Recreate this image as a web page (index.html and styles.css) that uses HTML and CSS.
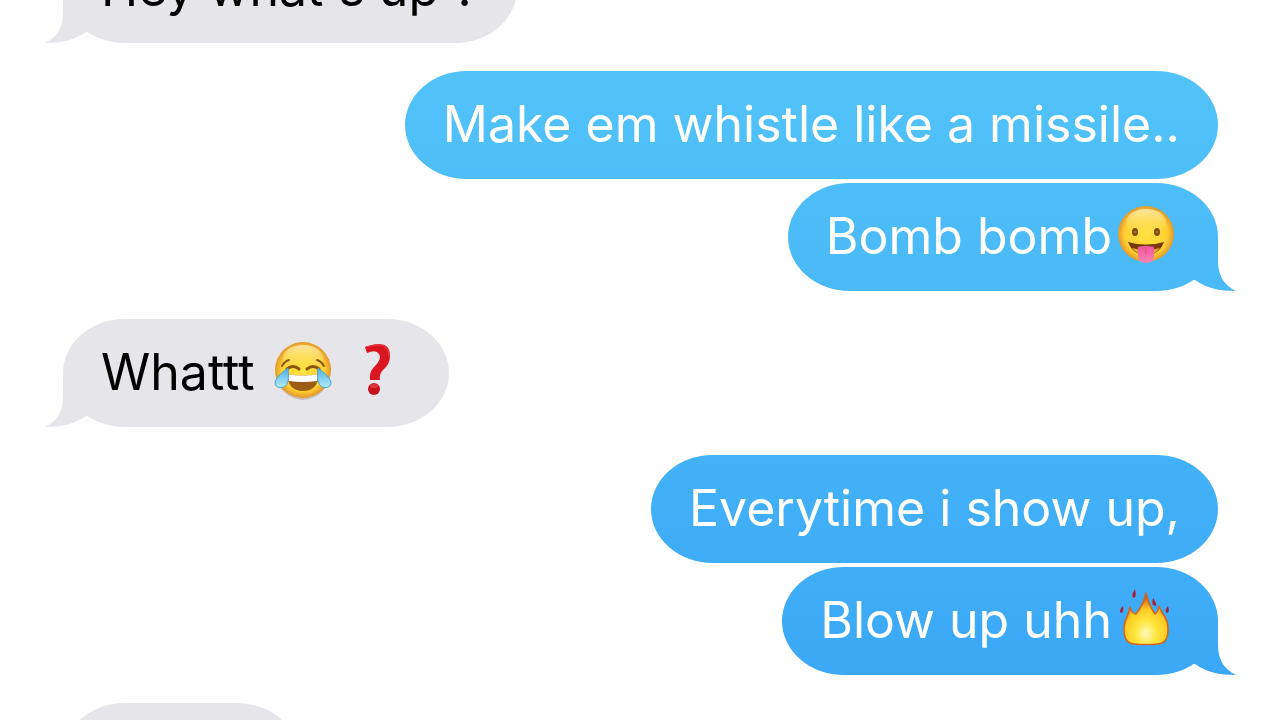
FILE: index.html
```html
<!DOCTYPE html>
<html lang="en">
<head>
    <meta charset="UTF-8">
    <meta name="viewport" content="width=device-width, initial-scale=1.0">
    <title>Messages</title>
    <link rel="stylesheet" href="styles.css">
</head>
<body>
    <main class="thread">
        <div class="group received">
            <p class="bubble tail">Hey what's up ?</p>
        </div>

        <div class="group sent">
            <p class="bubble">Make em whistle like a missile..</p>
            <p class="bubble tail">Bomb bomb<svg class="emoji" viewBox="0 0 60 60" role="img" aria-label="face with tongue">
                <defs>
                    <radialGradient id="face" cx="50%" cy="50%" r="51%">
                        <stop offset="0" stop-color="#ffe23f"/>
                        <stop offset=".75" stop-color="#fdd033"/>
                        <stop offset="1" stop-color="#e0922a"/>
                    </radialGradient>
                    <linearGradient id="shine" x1="0" y1="0" x2="0" y2="1">
                        <stop offset="0" stop-color="#fff3c4" stop-opacity=".75"/>
                        <stop offset="1" stop-color="#ffdf60" stop-opacity="0"/>
                    </linearGradient>
                    <linearGradient id="tongue" x1="0" y1="0" x2="0" y2="1">
                        <stop offset="0" stop-color="#f0559a"/>
                        <stop offset="1" stop-color="#fa83b9"/>
                    </linearGradient>
                </defs>
                <circle cx="30" cy="30" r="28" fill="url(#face)"/>
                <ellipse cx="30" cy="18" rx="20" ry="13" fill="url(#shine)"/>
                <ellipse cx="19" cy="28" rx="3" ry="4" fill="#7d4a12"/>
                <ellipse cx="41" cy="28" rx="3" ry="4" fill="#7d4a12"/>
                <circle cx="19" cy="28" r="1.3" fill="#a8752e"/>
                <circle cx="41" cy="28" r="1.3" fill="#a8752e"/>
                <path d="M12 38Q30 43 48 38Q43 51 30 51Q17 51 12 38Z" fill="#783a0d"/>
                <path d="M16 44Q30 48 44 44Q39 51 30 51Q21 51 16 44Z" fill="#e5a52c"/>
                <path d="M22 43Q30 41 38 43V51Q38 59 30 59Q22 59 22 51Z" fill="url(#tongue)"/>
                <path d="M30 44V50" stroke="#e04c8c" stroke-linecap="round"/>
            </svg></p>
        </div>

        <div class="group received">
            <p class="bubble tail">Whattt <svg class="emoji" viewBox="0 0 60 60" role="img" aria-label="face with tears of joy">
                <defs>
                    <linearGradient id="tear" x1="0" y1="0" x2="0" y2="1">
                        <stop offset="0" stop-color="#4caee0"/>
                        <stop offset="1" stop-color="#b5ebff"/>
                    </linearGradient>
                </defs>
                <ellipse cx="30" cy="32" rx="27" ry="28" fill="#a99a90" opacity=".5"/>
                <circle cx="30" cy="30" r="28" fill="url(#face)"/>
                <ellipse cx="30" cy="18" rx="20" ry="13" fill="url(#shine)"/>
                <g fill="none" stroke="#8a5511" stroke-linecap="round">
                    <path d="M9 26Q12 21 16 20M44 20Q48 21 51 26" stroke-width="2"/>
                    <path d="M14 29Q20 24 26 29M34 29Q40 24 46 29" stroke-width="3"/>
                </g>
                <path d="M14 34Q30 37 46 34Q45 51 30 51Q15 51 14 34Z" fill="#9b5c13"/>
                <path d="M14 34Q30 37 46 34L44 41Q30 43 16 41Z" fill="#fff"/>
                <path d="M15 28Q17 44 11 47Q4 49 2 44Q1 38 15 28Z" fill="url(#tear)" stroke="#4ba6d3"/>
                <path d="M45 28Q43 44 49 47Q56 49 58 44Q59 38 45 28Z" fill="url(#tear)" stroke="#4ba6d3"/>
            </svg> <svg class="emoji mark" viewBox="0 0 52 60" role="img" aria-label="question mark">
                <path d="M10 7Q35 -2 35 16Q35 24 28 30Q24 34 25 40H15Q14 31 20 26Q27 19 24 14Q21 9 12 13Z" fill="#da1721"/>
                <path d="M11 7Q34 0 34 16" fill="none" stroke="#ee4047"/>
                <circle cx="19" cy="49" r="6" fill="#c90f1e"/>
                <ellipse cx="19" cy="46" rx="4" ry="2" fill="#e0343c"/>
            </svg></p>
        </div>

        <div class="group sent">
            <p class="bubble">Everytime i show up,</p>
            <p class="bubble tail">Blow up uhh<svg class="emoji" viewBox="0 0 60 60" role="img" aria-label="fire">
                <defs>
                    <radialGradient id="flame" cx="50%" cy="78%" r="78%">
                        <stop offset="0" stop-color="#fff9c0"/>
                        <stop offset=".3" stop-color="#ffe73e"/>
                        <stop offset=".6" stop-color="#fdcb24"/>
                        <stop offset="1" stop-color="#c9301d"/>
                    </radialGradient>
                </defs>
                <path d="M30 5Q32 16 39 26Q42 24 43 18Q45 24 49 29Q52 34 52 42Q52 55 42 56Q30 57 18 56Q8 55 8 42Q8 34 11 29Q13 24 14 19Q15 25 20 26Q28 16 30 5Z" fill="url(#flame)" stroke="#d4641c" stroke-width="1.500" stroke-linejoin="round"/>
                <g fill="#a8203c">
                    <path d="M19 1Q21 9 18 10Q14 9 19 1Z"/>
                    <path d="M37 10Q42 17 39 18Q35 17 37 10Z"/>
                    <path d="M7 18Q8 25 5 25Q2 23 7 18Z"/>
                    <path d="M52 18Q54 24 51 25Q48 23 52 18Z"/>
                </g>
            </svg></p>
        </div>

        <div class="group received">
            <p class="bubble short tail"></p>
        </div>
    </main>
</body>
</html>
```
FILE: styles.css
```css
* {
    box-sizing: border-box;
}
body {
    margin: 0;
    height: 100vh;
    overflow: hidden;
    background: #fff;
    font-family: Inter, "Liberation Sans", sans-serif;
    font-size: 50px;
    line-height: 60px;
}
/* scrolled so the first bubble is partly off the top */
.thread {
    display: flex;
    flex-direction: column;
    gap: 28px;
    margin-top: -65px;
    padding: 0 62px 0 63px;
}
.group {
    display: flex;
    flex-direction: column;
    gap: 4px;
}
.received {
    align-items: flex-start;
    color: #000;
}
.sent {
    align-items: flex-end;
    color: #fff;
}
.bubble {
    position: relative;
    flex: none;
    margin: 0;
    min-height: 108px;
    padding: 23px 38px 25px;
    border-radius: 62px / 54px;
    white-space: nowrap;
}
.received .bubble,
.received .tail::after {
    background: #e6e5ea;
}
/* one gradient runs down the whole window behind the blue bubbles */
.sent .bubble,
.sent .tail::after {
    background: linear-gradient(#55c6f9, #39a6f6) fixed;
}
.tail::after {
    content: "";
    position: absolute;
    right: -18px;
    bottom: 0;
    width: 42px;
    height: 56px;
    clip-path: path("M0 45L0 0H24V26C24 39 29 50 42 56C25 56 12 53 1 45Z");
}
.received .tail::after {
    right: auto;
    left: -18px;
    transform: scaleX(-1);
}
.short {
    width: 236px;
}
/* negative block margins keep the glyph from growing the line */
.emoji {
    width: 60px;
    height: 60px;
    margin: -4px 4px;
    vertical-align: -6px;
}
.mark {
    width: 52px;
}
```
